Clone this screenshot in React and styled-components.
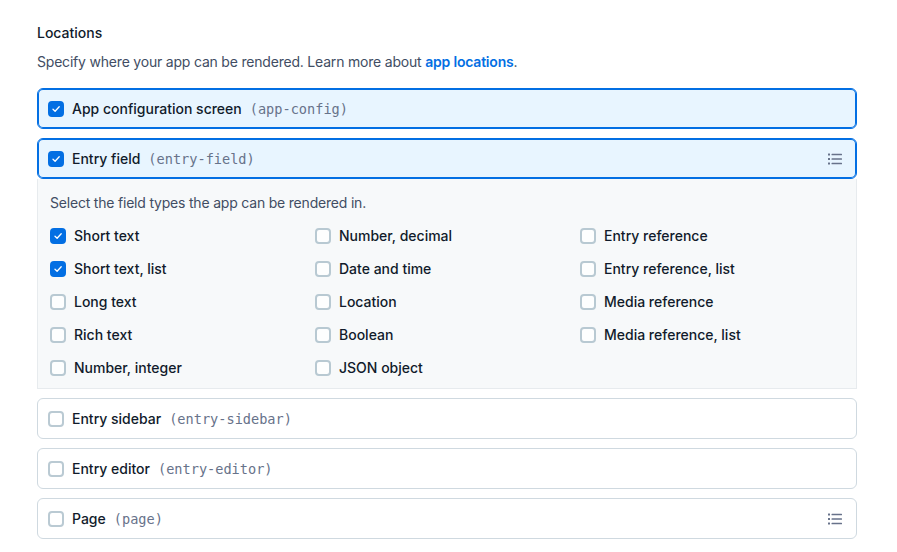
import React from 'react';
import styled, { createGlobalStyle, css } from 'styled-components';

const GlobalStyle = createGlobalStyle`
  body {
    margin: 0;
    background: #ffffff;
    font-family: Inter, "Noto Sans", "Liberation Sans", sans-serif;
    color: #111b2b;
    -webkit-font-smoothing: antialiased;
  }
`;

const Page = styled.div`
  width: 820px;
  padding: 23px 0 0 37px;
`;

const Heading = styled.h2`
  margin: 0;
  font-size: 14px;
  line-height: 20px;
  font-weight: 500;
  color: #111b2b;
`;

const Description = styled.p`
  margin: 9px 0 16px;
  font-size: 14px;
  line-height: 20px;
  letter-spacing: -0.2px;
  color: #414d63;
`;

const Link = styled.a`
  color: #036fe3;
  font-weight: 600;
  text-decoration: none;
`;

const List = styled.div`
  display: flex;
  flex-direction: column;
  gap: 9px;
`;

const Group = styled.div`
  display: flex;
  flex-direction: column;
`;

const Card = styled.div`
  display: flex;
  align-items: center;
  height: 41px;
  box-sizing: border-box;
  padding: 0 13px 0 10px;
  border: 1px solid #cfd9e0;
  border-radius: 6px;
  background: #ffffff;
  ${({ $active }) =>
    $active &&
    css`
      border-color: #036fe3;
      box-shadow: inset 0 0 0 1px #036fe3;
      background: #e8f5ff;
    `}
`;

const Box = styled.span`
  flex: none;
  width: 16px;
  height: 16px;
  box-sizing: border-box;
  border-radius: 4px;
  display: flex;
  align-items: center;
  justify-content: center;
  border: 2px solid ${({ $checked }) => ($checked ? '#036fe3' : '#aec1cc')};
  background: ${({ $checked }) => ($checked ? '#036fe3' : '#ffffff')};
  opacity: ${({ $checked }) => ($checked ? 1 : 0.85)};
`;

const Label = styled.span`
  margin-left: 8px;
  font-size: 14px;
  line-height: 20px;
  font-weight: 500;
  color: #111b2b;
`;

const Code = styled.span`
  margin-left: 8px;
  font-family: "DejaVu Sans Mono", "Liberation Mono", monospace;
  font-size: 13.6px;
  line-height: 20px;
  color: #67728a;
`;

const Spacer = styled.span`
  flex: 1;
`;

const Panel = styled.div`
  background: #f7f9fa;
  border: 1px solid #e7ebee;
  border-top: none;
  padding: 14px 12px 10px;
`;

const PanelText = styled.p`
  margin: 0 0 13px;
  font-size: 14px;
  line-height: 20px;
  letter-spacing: -0.2px;
  color: #414d63;
`;

const Grid = styled.div`
  display: grid;
  grid-template-columns: 265px 265px 1fr;
  grid-auto-flow: column;
  grid-template-rows: repeat(5, 20px);
  row-gap: 13px;
`;

const Option = styled.label`
  display: flex;
  align-items: center;
  font-size: 14px;
  line-height: 20px;
  font-weight: 500;
  color: #111b2b;
`;

const Check = () => (
  <svg width="10" height="10" viewBox="0 0 10 10" fill="none">
    <path d="M2 5.2 L4.1 7.2 L8.2 2.8" stroke="#ffffff" strokeWidth="1.3" strokeLinecap="round" strokeLinejoin="round" />
  </svg>
);

const Checkbox = ({ checked }) => <Box $checked={checked}>{checked && <Check />}</Box>;

const ListIcon = () => (
  <svg width="16" height="16" viewBox="0 0 16 16" fill="#67728a">
    <rect x="1" y="2.5" width="2" height="2" rx="0.3" />
    <rect x="1" y="7" width="2" height="2" rx="0.3" />
    <rect x="1" y="11.5" width="2" height="2" rx="0.3" />
    <rect x="4.5" y="2.75" width="10.5" height="1.5" rx="0.5" />
    <rect x="4.5" y="7.25" width="10.5" height="1.5" rx="0.5" />
    <rect x="4.5" y="11.75" width="10.5" height="1.5" rx="0.5" />
  </svg>
);

const fieldTypes = [
  ['Short text', true],
  ['Short text, list', true],
  ['Long text', false],
  ['Rich text', false],
  ['Number, integer', false],
  ['Number, decimal', false],
  ['Date and time', false],
  ['Location', false],
  ['Boolean', false],
  ['JSON object', false],
  ['Entry reference', false],
  ['Entry reference, list', false],
  ['Media reference', false],
  ['Media reference, list', false],
];

const LocationCard = ({ label, code, active, icon }) => (
  <Card $active={active}>
    <Checkbox checked={active} />
    <Label>{label}</Label>
    <Code>({code})</Code>
    <Spacer />
    {icon && <ListIcon />}
  </Card>
);

export default function App() {
  return (
    <>
      <GlobalStyle />
      <Page>
        <Heading>Locations</Heading>
        <Description>
          Specify where your app can be rendered. Learn more about <Link href="#">app locations</Link>.
        </Description>
        <List>
          <LocationCard label="App configuration screen" code="app-config" active />
          <Group>
            <LocationCard label="Entry field" code="entry-field" active icon />
            <Panel>
              <PanelText>Select the field types the app can be rendered in.</PanelText>
              <Grid>
                {fieldTypes.map(([name, checked]) => (
                  <Option key={name}>
                    <Checkbox checked={checked} />
                    <Label>{name}</Label>
                  </Option>
                ))}
              </Grid>
            </Panel>
          </Group>
          <LocationCard label="Entry sidebar" code="entry-sidebar" />
          <LocationCard label="Entry editor" code="entry-editor" />
          <LocationCard label="Page" code="page" icon />
        </List>
      </Page>
    </>
  );
}
